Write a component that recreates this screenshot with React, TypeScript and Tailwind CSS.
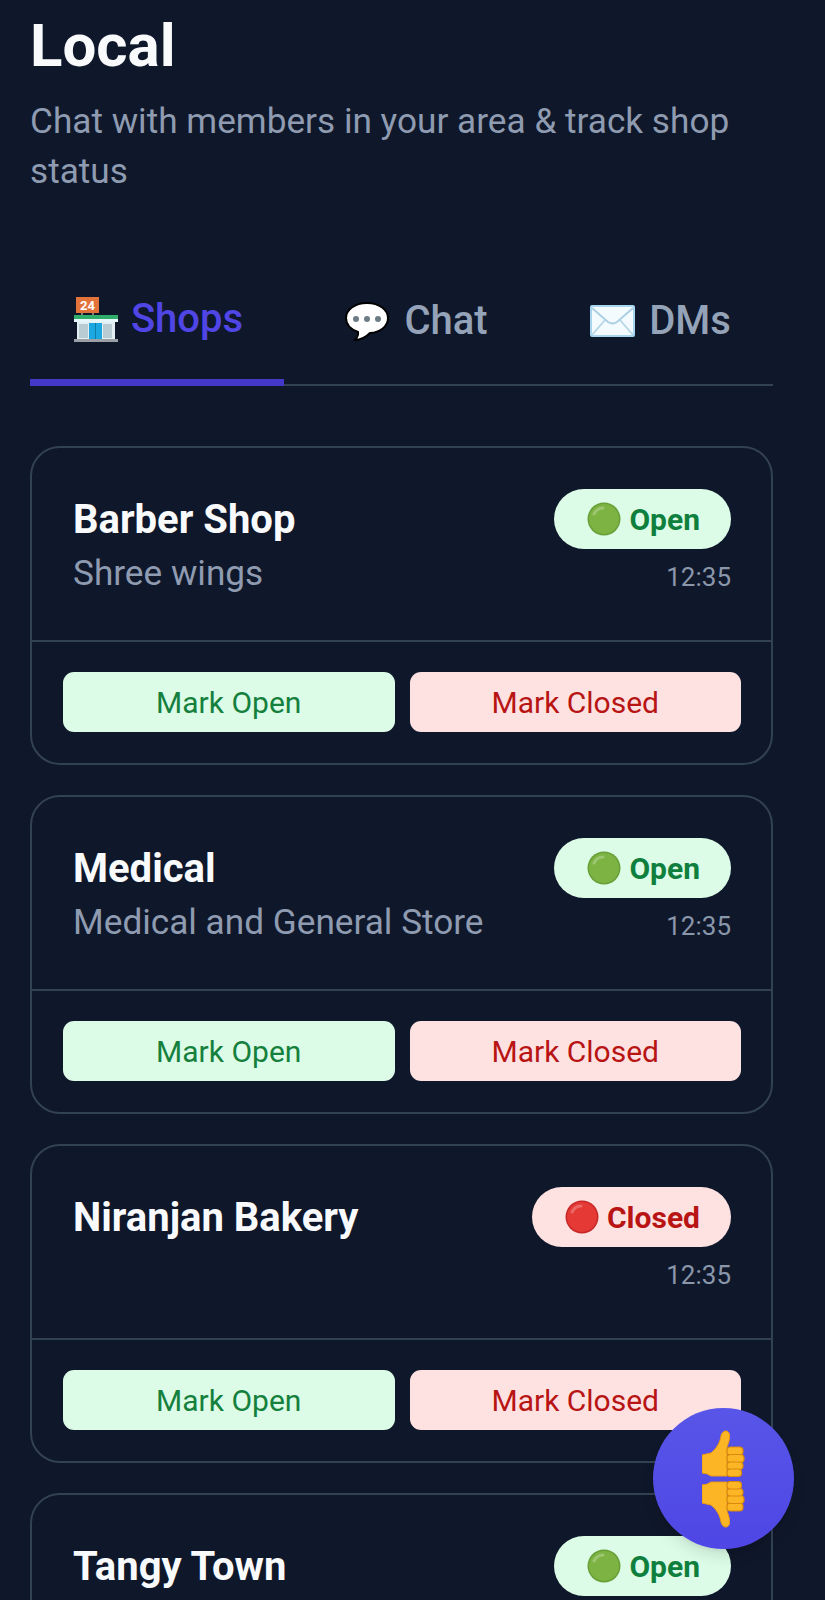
function StoreIcon() {
  return (
    <svg viewBox="0 0 44 45" className="h-[45px] w-[44px] shrink-0">
      <rect x="7" y="15" width="2" height="4" fill="#8d7a6b" />
      <rect x="18" y="15" width="2" height="4" fill="#8d7a6b" />
      <rect x="2" y="0" width="23" height="16" fill="#e2733a" />
      <text x="13.5" y="13" textAnchor="middle" fontSize="13" fontWeight="700" fill="#fff" fontFamily="Roboto, sans-serif">24</text>
      <rect x="0" y="18" width="44" height="4" fill="#2fae6b" />
      <rect x="0" y="22" width="44" height="3" fill="#e6f6fb" />
      <rect x="3" y="25" width="38" height="17" fill="#e3eef2" />
      <rect x="5" y="27" width="9" height="14" fill="#b9ccd3" />
      <rect x="29" y="27" width="9" height="14" fill="#b9ccd3" />
      <rect x="15" y="26" width="13" height="16" fill="#1ca7e0" />
      <rect x="21" y="26" width="1" height="16" fill="#0b7fa8" />
      <rect x="0" y="42" width="44" height="3" fill="#9aa0a6" />
    </svg>
  );
}

function ChatIcon() {
  return (
    <svg viewBox="0 0 46 42" className="h-[42px] w-[46px] shrink-0">
      <path
        d="M23 3C10.500 3 2 10 2 18c0 6.500 5 11.500 12 14 .5 3-1 6-3 8 5 0 11-3 15-7 10-.5 18-6.500 18-15C44 10 35.500 3 23 3z"
        fill="#fff"
        stroke="#000"
        strokeWidth="2"
      />
      <circle cx="12" cy="19" r="3" fill="#6b7c85" />
      <circle cx="23" cy="19" r="3" fill="#6b7c85" />
      <circle cx="34" cy="19" r="3" fill="#6b7c85" />
    </svg>
  );
}

function MailIcon() {
  return (
    <svg viewBox="0 0 45 32" className="h-[32px] w-[45px] shrink-0">
      <rect x="1" y="1" width="43" height="30" rx="1" fill="#f4fbfe" stroke="#a7d6ee" strokeWidth="2" />
      <path d="M2 3l16 14q4.500 3 9 0L43 3" fill="none" stroke="#a9cfe3" strokeWidth="1.800" />
      <path d="M2 30l13-15M43 30L30 15" fill="none" stroke="#b4d6e7" strokeWidth="1.800" />
    </svg>
  );
}

function Dot({ color, shade }: { color: string; shade: string }) {
  return (
    <svg viewBox="0 0 34 34" className="h-[34px] w-[34px] shrink-0">
      <circle cx="17" cy="17" r="16.500" fill={shade} />
      <circle cx="17" cy="17" r="15" fill={color} />
      <path d="M7 12c2-4 5-6 9-6" fill="none" stroke="#ffffff" strokeOpacity="0.25" strokeWidth="3" strokeLinecap="round" />
    </svg>
  );
}

function Thumb({ down }: { down?: boolean }) {
  return (
    <svg viewBox="0 0 43 47" className={`h-[47px] w-[43px] ${down ? "-scale-y-100" : ""}`}>
      <path
        d="M0 25l9-2c5-4 9-10 10-17 1-6 8-7 8.500-1 .5 5-1.500 9-2.500 12v29H9q-4-3-9-3z"
        fill="#fcb625"
        stroke="#ec9a12"
        strokeWidth="1"
      />
      <g fill="#fcb625" stroke="#d98a0a" strokeWidth="1.200">
        <rect x="25" y="17" width="16" height="8" rx="3.500" />
        <rect x="25" y="24.500" width="17" height="8" rx="3.500" />
        <rect x="25" y="32" width="16" height="7.500" rx="3.500" />
        <rect x="25" y="39" width="14.500" height="7.500" rx="3.500" />
      </g>
    </svg>
  );
}

function StatusPill({ open }: { open: boolean }) {
  return (
    <span
      className={`flex h-[60px] items-center gap-[8px] rounded-full pr-[31px] pl-[33px] text-[30px] font-bold ${
        open ? "bg-[#dcfce7] text-[#0f7f3d]" : "bg-[#fee2e2] text-[#b81414]"
      }`}
    >
      {open ? <Dot color="#7cb342" shade="#689f38" /> : <Dot color="#e53935" shade="#c62828" />}
      {open ? "Open" : "Closed"}
    </span>
  );
}

function ShopCard({ name, note, open }: { name: string; note?: string; open: boolean }) {
  return (
    <div className="shrink-0 rounded-[30px] border-2 border-[#334155]">
      <div className="flex items-start justify-between border-b-2 border-[#334155] pt-[41px] pr-[40px] pb-[43px] pl-[41px]">
        <div className="min-h-[108px] pt-[1px]">
          <h3 className="text-[40px] leading-[60px] font-bold text-[#f8fafc]">{name}</h3>
          {note && <p className="text-[35.200px] leading-[47px] text-[#8e9bb0]">{note}</p>}
        </div>
        <div className="flex flex-col items-end">
          <StatusPill open={open} />
          <span className="mt-[11px] text-[26px] leading-[34px] text-[#8a96aa]">12:35</span>
        </div>
      </div>
      <div className="flex gap-[15px] pt-[30px] pr-[30px] pb-[31px] pl-[31px]">
        <button className="h-[60px] flex-1 rounded-[11px] bg-[#dcfce7] text-[30px] text-[#15803d]">Mark Open</button>
        <button className="h-[60px] flex-1 rounded-[11px] bg-[#fee2e2] text-[30px] text-[#b81414]">Mark Closed</button>
      </div>
    </div>
  );
}

export default function App() {
  return (
    <div className="relative h-[1600px] w-[825px] overflow-hidden bg-[#0f172a] font-['Roboto',sans-serif]">
      <div className="flex h-full flex-col pt-[11px] pr-[52px] pl-[30px]">
        {/* HEADER */}
        <h1 className="text-[60px] leading-[70px] font-bold text-[#f8fafc]">Local</h1>
        <p className="mt-[15px] text-[35.200px] leading-[50px] text-[#8e9bb0]">
          Chat with members in your area &amp; track shop status
        </p>

        {/* TABS */}
        <div className="mt-[98px] flex h-[92px] items-end justify-between border-b-2 border-[#334155]">
          <div className="-mb-[2px] flex h-[92px] w-[254px] items-start justify-center gap-[13px] border-b-[7px] border-[#4338ca] pt-[3px] pl-[3px] text-[40px] font-medium text-[#4f46e5]">
            <span className="flex h-[44px] items-center"><StoreIcon /></span>
            <span className="leading-[44px]">Shops</span>
          </div>
          <div className="flex h-[90px] w-[225px] items-start justify-center gap-[14px] pt-[5px] text-[40px] font-medium text-[#94a3b8]">
            <span className="flex h-[44px] items-center"><ChatIcon /></span>
            <span className="leading-[44px]">Chat</span>
          </div>
          <div className="flex h-[90px] w-[225px] items-start justify-center gap-[14px] pt-[5px] text-[40px] font-medium text-[#94a3b8]">
            <span className="flex h-[44px] items-center"><MailIcon /></span>
            <span className="leading-[44px]">DMs</span>
          </div>
        </div>

        {/* SHOP LIST */}
        <div className="mt-[60px] flex flex-col gap-[30px]">
          <ShopCard name="Barber Shop" note="Shree wings" open />
          <ShopCard name="Medical" note="Medical and General Store" open />
          <ShopCard name="Niranjan Bakery" open={false} />
          <ShopCard name="Tangy Town" open />
        </div>
      </div>

      {/* FEEDBACK BUTTON */}
      <div className="absolute top-[1408px] left-[653px] flex h-[141px] w-[141px] flex-col items-center justify-center gap-[4px] rounded-full bg-gradient-to-b from-[#5855e8] to-[#4f46e5] shadow-lg">
        <Thumb />
        <Thumb down />
      </div>
    </div>
  );
}
